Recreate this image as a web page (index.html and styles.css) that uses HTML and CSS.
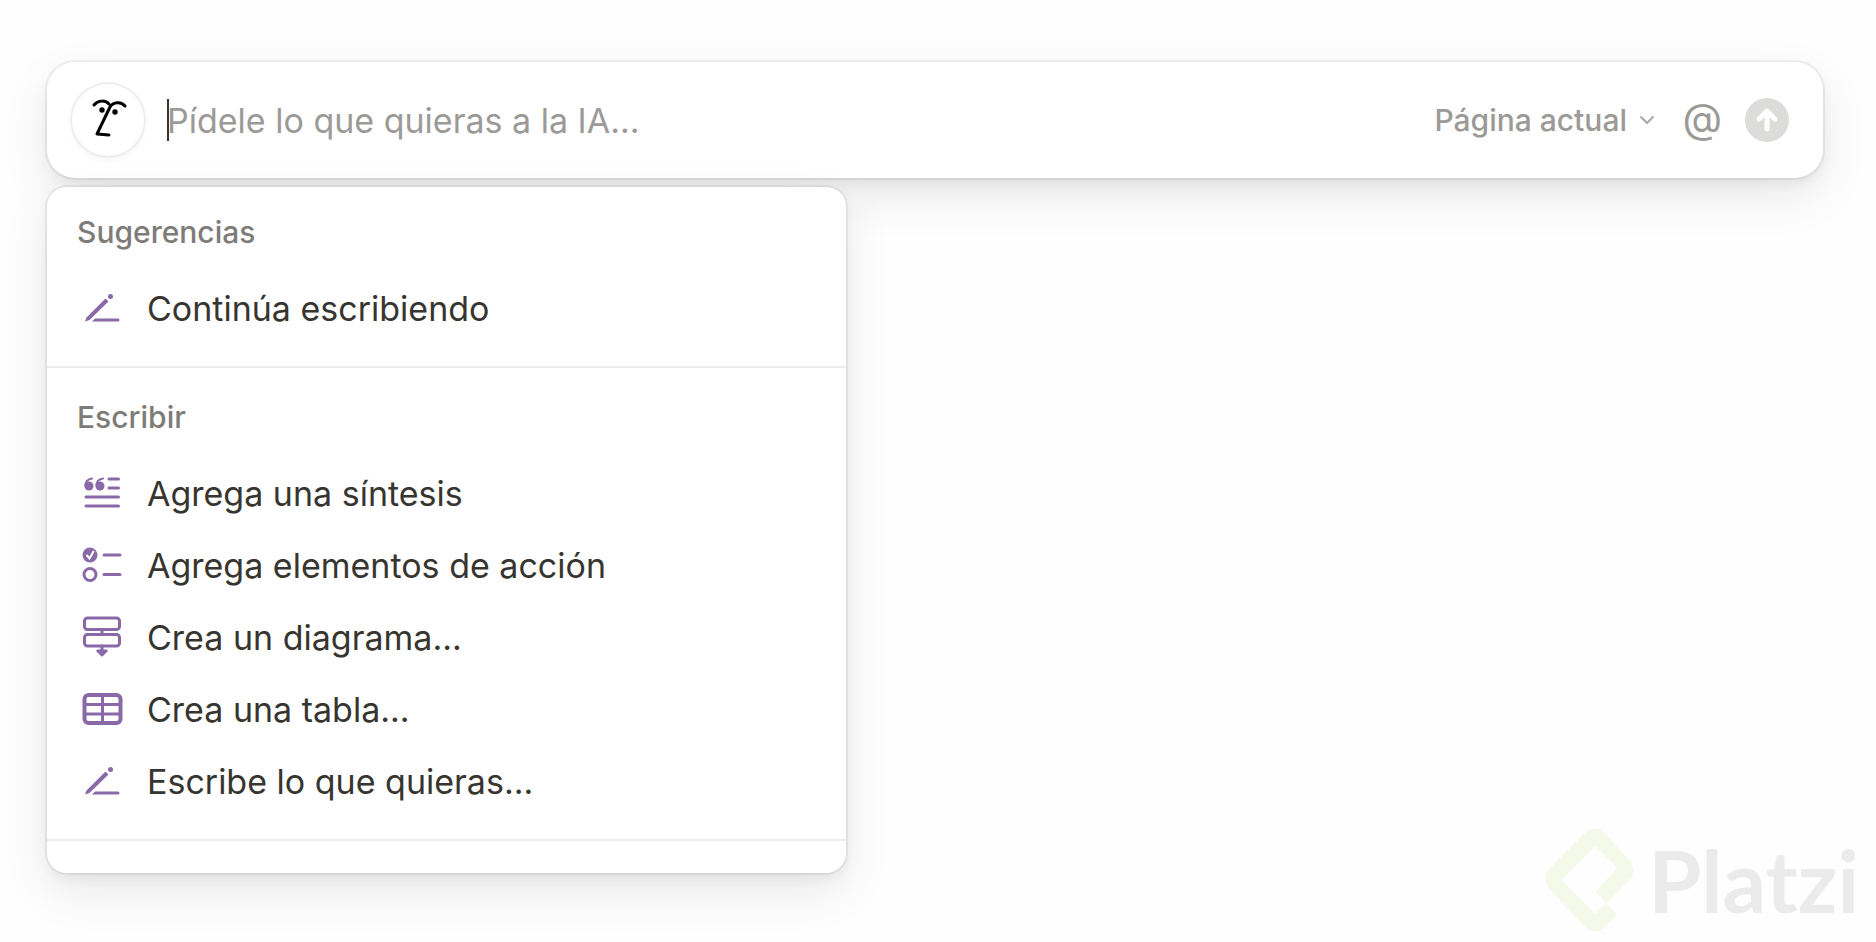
FILE: index.html
```html
<!DOCTYPE html>
<html lang="es">
<head>
    <meta charset="UTF-8">
    <meta name="viewport" content="width=device-width, initial-scale=1.0">
    <title>Asistente de IA</title>
    <link rel="stylesheet" href="styles.css">
</head>
<body>
    <main class="assistant">
        <form class="prompt-bar">
            <div class="avatar">
                <svg class="face" viewBox="0 0 72 72" fill="none" stroke="#000" stroke-width="3" stroke-linecap="round" stroke-linejoin="round" aria-hidden="true">
                    <path d="M22 21c4-5 11-5 15-1"/>
                    <path d="M53 22c-4-5-12-4-15 1L25 50l12 1"/>
                    <circle cx="30" cy="26" r="2.700" fill="#000" stroke="none"/>
                    <circle cx="43" cy="28" r="2.700" fill="#000" stroke="none"/>
                </svg>
            </div>
            <input class="prompt-input" type="text" placeholder="Pídele lo que quieras a la IA..." aria-label="Pídele lo que quieras a la IA">
            <div class="scope">
                <select class="scope-select" aria-label="Contexto">
                    <option>Página actual</option>
                </select>
                <svg class="chevron" viewBox="0 0 16 10" fill="none" stroke="#aaa9a7" stroke-width="2" stroke-linecap="round" aria-hidden="true"><path d="M2 2l6 6 6-6"/></svg>
            </div>
            <button class="mention" type="button" aria-label="Mencionar">@</button>
            <button class="send" type="submit" aria-label="Enviar">
                <svg viewBox="0 0 44 44" fill="none" stroke="#fff" stroke-width="5" stroke-linecap="round" stroke-linejoin="round" aria-hidden="true"><path d="M22 31V14M14 21l8-8 8 8"/></svg>
            </button>
        </form>

        <div class="menu">
            <section class="menu-section">
                <h2>Sugerencias</h2>
                <button class="menu-item" type="button">
                    <svg class="icon" viewBox="0 -2 40 40" aria-hidden="true">
                        <path d="M3 31.500l1.500-4L23.500 8.500l3 3L7.500 30z"/>
                        <circle cx="28.500" cy="6.500" r="2.500"/>
                        <path d="M13 28.500h23a1.500 1.500 0 0 1 0 3H10z"/>
                    </svg>
                    Continúa escribiendo
                </button>
            </section>
            <section class="menu-section">
                <h2>Escribir</h2>
                <button class="menu-item" type="button">
                    <svg class="icon" viewBox="0 -1 40 40" aria-hidden="true">
                        <circle cx="7" cy="12" r="4.500"/>
                        <circle cx="18" cy="12" r="4.500"/>
                        <path class="line thin" d="M3.500 12c-.5-4 2-7 6.500-7.500M14.500 12c-.5-4 2-7 6.500-7.500"/>
                        <path class="line" d="M27 5h9.500M27 14h9.500M4 23h32.500M4 32h32.500"/>
                    </svg>
                    Agrega una síntesis
                </button>
                <button class="menu-item" type="button">
                    <svg class="icon" viewBox="0 -1 40 40" aria-hidden="true">
                        <circle cx="8" cy="9" r="7.500"/>
                        <path d="M5 9.500l2.500 3 4-7" fill="none" stroke="#fff" stroke-width="2" stroke-linecap="round"/>
                        <circle class="line" cx="8" cy="28.500" r="6"/>
                        <path class="line" d="M22 9h16M22 28.500h16"/>
                    </svg>
                    Agrega elementos de acción
                </button>
                <button class="menu-item" type="button">
                    <svg class="icon" viewBox="0 -2 40 40" aria-hidden="true">
                        <rect class="line" x="2.500" y="-1" width="35" height="11.500" rx="3"/>
                        <rect class="line" x="2.500" y="15.500" width="35" height="11.500" rx="3"/>
                        <path class="line" d="M20 11v4M20 27v5"/>
                        <path d="M16 30.500h8q3 0 1 2.500l-4 4q-1 1-2 0l-4-4q-2-2.500 1-2.500z"/>
                    </svg>
                    Crea un diagrama...
                </button>
                <button class="menu-item" type="button">
                    <svg class="icon" viewBox="0 -2 40 40" aria-hidden="true">
                        <rect class="line thick" x="2.500" y="4" width="36" height="28" rx="4"/>
                        <path class="line" d="M2.500 13.500h36M2.500 23h36M20.500 4v28"/>
                    </svg>
                    Crea una tabla...
                </button>
                <button class="menu-item" type="button">
                    <svg class="icon" viewBox="0 -2 40 40" aria-hidden="true">
                        <path d="M3 31.500l1.500-4L23.500 8.500l3 3L7.500 30z"/>
                        <circle cx="28.500" cy="6.500" r="2.500"/>
                        <path d="M13 28.500h23a1.500 1.500 0 0 1 0 3H10z"/>
                    </svg>
                    Escribe lo que quieras...
                </button>
            </section>
        </div>
    </main>

    <div class="watermark">
        <svg class="watermark-logo" viewBox="0 0 88 104" fill="#f4f9ea" aria-hidden="true">
            <path d="M60 75L83 52Q92 42 83 32L59 5Q49-4 39 5L4 40Q-5 51 4 62L39 99Q49 108 59 99L71 87L60 75L49 86L15 52L49 18L71 40L50 64Z"/>
        </svg>
        <span>Platzi</span>
    </div>
</body>
</html>
```

FILE: styles.css
```css
* { box-sizing: border-box; }
body { margin: 0; min-height: 100vh; background-color: #fefefe; color: #37352f; font-family: Inter, "Liberation Sans", sans-serif; }
button, input, select { font-family: inherit; border: 0; background: none; padding: 0; margin: 0; }
.assistant { padding: 62px 53px 68px 47px; }

.prompt-bar { display: flex; align-items: center; height: 116px; padding: 0 34px 0 25px; background-color: #fff; border-radius: 28px; box-shadow: 0 0 0 2px rgba(15, 15, 15, 0.06), 0 6px 12px rgba(15, 15, 15, 0.05), 0 18px 48px rgba(15, 15, 15, 0.09); }
.avatar { width: 72px; height: 72px; margin-right: 23px; border-radius: 50%; box-shadow: 0 0 0 2px #ededed, 0 4px 8px rgba(15, 15, 15, 0.04); }
.face { display: block; width: 72px; height: 72px; }
.prompt-input { flex: 1; min-width: 0; height: 42px; font-size: 34px; color: #37352f; outline: none; background: linear-gradient(#37352f, #37352f) left / 2px 100% no-repeat; }
.prompt-input::placeholder { color: #9b9a97; opacity: 1; }
.scope { display: flex; align-items: center; gap: 12px; margin-right: 27px; }
.scope-select { appearance: none; height: 40px; font-size: 30px; font-weight: 500; color: #9b9a97; }
.chevron { width: 16px; height: 10px; }
.mention { margin-right: 23px; padding-bottom: 4px; font-size: 41px; line-height: 40px; color: #9b9a97; }
.send { width: 44px; height: 44px; border-radius: 50%; background-color: #dcdcdb; }
.send svg { display: block; }

.menu { width: 45%; min-width: 600px; margin-top: 9px; padding-bottom: 32px; overflow: hidden; background-color: #fff; border-radius: 20px; box-shadow: 0 0 0 2px rgba(15, 15, 15, 0.06), 0 6px 12px rgba(15, 15, 15, 0.05), 0 18px 48px rgba(15, 15, 15, 0.09); }
.menu-section { padding: 9px 0 22px; border-bottom: 2px solid #ededec; }
.menu-section:first-child { padding-top: 5px; }
.menu-section h2 { margin: 0; padding: 0 30px; font-size: 30px; line-height: 80px; font-weight: 500; color: #7d7c78; }
.menu-item { display: flex; align-items: center; gap: 25px; width: 100%; height: 72px; padding: 0 35px; font-size: 34px; color: #37352f; text-align: left; }
.icon { flex: none; width: 40px; height: 40px; overflow: visible; fill: #8a69a8; }
.line { fill: none; stroke: #8a69a8; stroke-width: 3; stroke-linecap: round; }
.thin { stroke-width: 2; }
.thick { stroke-width: 4; }

/* brand mark over the bottom right corner */
.watermark { position: absolute; right: 17px; bottom: 10px; display: flex; align-items: center; gap: 14px; font-family: Lato, sans-serif; font-size: 86px; line-height: 104px; font-weight: 700; color: #ebebeb; }
.watermark-logo { width: 88px; height: 104px; }
```
